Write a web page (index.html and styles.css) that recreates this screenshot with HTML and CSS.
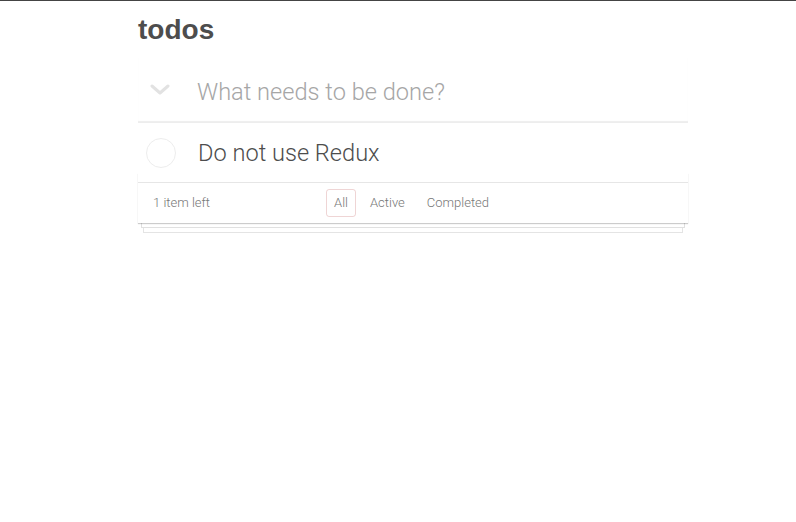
FILE: index.html
```html
<!DOCTYPE html>
<html lang="en">
<head>
<meta charset="utf-8">
<title>todos</title>
<link rel="stylesheet" href="styles.css">
</head>
<body>
<div class="page">
  <section class="todoapp">
    <h1 class="title">todos</h1>
    <div class="new-row">
      <svg class="toggle-all" width="20" height="12" viewBox="0 0 20 12"><polyline points="2,2 10,9 18,2" fill="none" stroke="#e2e2e2" stroke-width="3" stroke-linecap="round" stroke-linejoin="round"/></svg>
      <span class="placeholder">What needs to be done?</span>
    </div>
    <ul class="todo-list">
      <li class="todo">
        <span class="toggle"></span>
        <span class="label">Do not use Redux</span>
      </li>
    </ul>
    <footer class="footer">
      <span class="count">1 item left</span>
      <ul class="filters">
        <li><a class="filter selected">All</a></li>
        <li><a class="filter">Active</a></li>
        <li><a class="filter">Completed</a></li>
      </ul>
    </footer>
  </section>
</div>
</body>
</html>
```
FILE: styles.css
```css
html, body {
  margin: 0;
  padding: 0;
  background: #fff;
}
body {
  font-family: "Roboto", "Liberation Sans", sans-serif;
  font-weight: 300;
  color: #4d4d4d;
  border-top: 1px solid #444;
}
.page {
  padding-left: 138px;
  min-height: 521px;
  box-sizing: border-box;
}
.todoapp {
  width: 550px;
}
.title {
  margin: 0;
  height: 57px;
  line-height: 58px;
  font-family: "Liberation Sans", sans-serif;
  font-size: 28px;
  font-weight: 700;
  color: #4d4d4d;
}
.new-row {
  height: 65px;
  box-sizing: border-box;
  display: flex;
  align-items: center;
  box-shadow: inset 0 -2px 1px rgba(0, 0, 0, 0.07);
}
.toggle-all {
  width: 20px;
  margin-left: 12px;
  margin-right: 27px;
  margin-bottom: 2px;
}
.placeholder {
  font-size: 23.6px;
  color: #a6a6a6;
  padding-top: 2px;
}
.todo-list {
  margin: 0;
  padding: 0;
  list-style: none;
}
.todo {
  height: 59px;
  display: flex;
  align-items: center;
}
.toggle {
  width: 28px;
  height: 28px;
  border: 1px solid #ededed;
  border-radius: 50%;
  margin-left: 8px;
  margin-right: 22px;
}
.label {
  font-size: 23.6px;
  color: #4d4d4d;
}
.footer {
  position: relative;
  height: 20px;
  padding: 10px 15px;
  border-top: 1px solid #e6e6e6;
  color: #777;
  font-size: 13px;
  line-height: 20px;
  display: flex;
  align-items: center;
}
.footer::before {
  content: "";
  position: absolute;
  left: 0;
  right: 0;
  bottom: 0;
  height: 50px;
  box-shadow:
    0 1px 1px rgba(0, 0, 0, 0.2),
    0 8px 0 -4px #fff,
    0 8px 0 -3px #e0e0e0,
    0 15px 0 -6px #fff,
    0 15px 0 -5px #e4e4e4;
  pointer-events: none;
}
.count {
  width: 150px;
}
.filters {
  margin: 0 0 0 20px;
  padding: 0;
  list-style: none;
  display: flex;
}
.filter {
  display: block;
  margin: 3px;
  padding: 3px 7px;
  border: 1px solid transparent;
  border-radius: 3px;
  color: #777;
}
.filter.selected {
  border-color: rgba(175, 47, 47, 0.2);
}
```
